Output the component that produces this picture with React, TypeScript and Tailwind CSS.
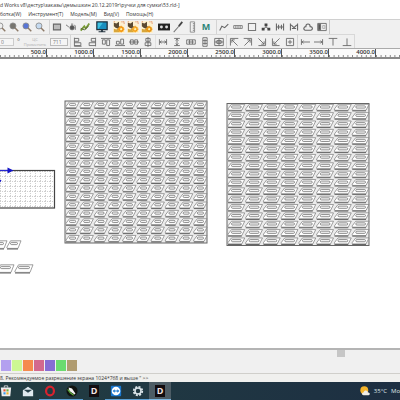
import React from 'react';

type Tool = { label: string; icon: React.ReactNode };
type PathTool = { label: string; d: string };

const Icon = ({ children }: { children: React.ReactNode }) => (
    <svg viewBox="0 0 14 14" className="h-2.5 w-2.5" fill="none" stroke="#666" strokeWidth="1.2">{children}</svg>
);

const Magnifier = ({ glass }: { glass: string }) => (
    <Icon>
        <circle cx="5.5" cy="5.5" r="4.2" fill={glass} stroke="#8a8a8a" />
        <path d="M8.5 8.5l4.500 4.500" stroke="#8d7a68" strokeWidth="2" />
    </Icon>
);

const Cutout = ({ flower }: { flower: string }) => (
    <svg viewBox="0 0 14 14" className="h-3 w-3" fill="none">
        <path d="M0 0h14v14H0z" fill="#fdf0d0" />
        <path d="M1 2l3 1 3-2v5l3 1-4 2-3-1-2-2z" fill="#5b4a33" />
        <path d="M1 13V9l3 1 3-2 1 5z" fill="#d8a63c" />
        <circle cx="9.500" cy="9.500" r="3.300" fill={flower} />
        <path d="M9.500 5.500v8M5.500 9.500h8M7 7l5 5M12 7l-5 5" stroke="#e67b10" strokeWidth=".8" />
        <circle cx="9.500" cy="9.500" r="1.300" fill="#fff3a8" />
        <path d="M10 1h3v3M1 1h1" stroke="#c9523a" strokeDasharray="1 1" />
    </svg>
);

const viewTools: Tool[] = [
    { label: 'Масштаб', icon: <Magnifier glass="#eeeeee" /> },
    { label: 'Уменьшить', icon: <Magnifier glass="#77756f" /> },
    { label: 'Увеличить', icon: <Magnifier glass="#5875d6" /> },
    { label: 'Показать всё', icon: <Magnifier glass="#c5daf0" /> },
];

const drawTools: Tool[] = [
    { label: 'Рамка', icon: <Icon><path d="M2 3h10v8H2z" fill="#bbb" stroke="#666" strokeWidth="1.5" /></Icon> },
    { label: 'Узлы', icon: <Icon><circle cx="8.500" cy="8" r="3" fill="#555" /><path d="M0 4l4 3M12 4l1 2v5M7 3h3" /></Icon> },
    { label: 'Кисть', icon: <Icon><path d="M1 12l5-6 2 3 5-7" stroke="#779a35" strokeWidth="2.5" /><path d="M1 9l5 2 6-5" stroke="#4c5730" /></Icon> },
];

const monitorTools: Tool[] = [
    {
        label: 'Экран',
        icon: (
            <svg viewBox="0 0 14 14" className="h-3 w-3">
                <path d="M1 1h12v9H1z" fill="#1b8fc0" stroke="#20303c" strokeWidth="1.500" />
                <path d="M2 2h6L3 9H2z" fill="#3fc2e2" />
                <path d="M6 10h2v2h3v1H3v-1h3z" fill="#20303c" />
            </svg>
        ),
    },
];

const cutTools: Tool[] = [
    { label: 'Вырезка 1', icon: <Cutout flower="#ffb11f" /> },
    { label: 'Вырезка 2', icon: <Cutout flower="#ffc53a" /> },
    { label: 'Вырезка 3', icon: <Cutout flower="#e6a71f" /> },
];

const machineTools: Tool[] = [
    { label: 'Лента', icon: <svg viewBox="0 0 14 14" className="h-3 w-3"><path d="M0 3h14v8H0z" fill="#222" /><circle cx="4" cy="7" r="1.700" fill="#ddd" /><circle cx="10" cy="7" r="1.700" fill="#ddd" /></svg> },
    { label: 'Лазер', icon: <svg viewBox="0 0 14 14" className="h-3 w-3" fill="none"><path d="M2 13l7-8" stroke="#777" strokeWidth="1.200" /><path d="M8 6l4-5" stroke="#444" strokeWidth="2" /></svg> },
    { label: 'Линейка', icon: <svg viewBox="0 0 14 14" className="h-3 w-3" fill="none"><path d="M5 1h5v12H5zM8 3h2M8 5h2M8 7h2M8 9h2M8 11h2" stroke="#888" /></svg> },
];

const shapeTools: Tool[] = [
    { label: 'Кривая', icon: <Icon><path d="M1 12l3-6 4 2 5-5" strokeWidth="1.500" /></Icon> },
    { label: 'Соединить', icon: <Icon><path d="M1 5h12v4H1zM4 5v4M7 5v4M10 5v4" stroke="#777" /></Icon> },
    { label: 'Квадрат', icon: <Icon><path d="M2 2h10v10H2z" stroke="#777" strokeWidth="1.500" /></Icon> },
    { label: 'Группа', icon: <Icon><path d="M7 4v3L3 10M7 7l4 3" /><path d="M5 2h4v4H5zM1 8h4v4H1zM9 8h4v4H9z" fill="#444" stroke="none" /></Icon> },
    { label: 'Ширина', icon: <Icon><path d="M2 2v10M12 2v10M2 7h10M5 4v6M9 4v6" strokeWidth="1.500" /></Icon> },
    { label: 'Разрыв', icon: <Icon><path d="M2 2v10M12 2v10M3 4l4 4 4-4M4 9h6" strokeWidth="1.500" /></Icon> },
    { label: 'Облако', icon: <Icon><path d="M3 11.500c-3-1-2-5 1-5 0-5 6-5 6 0 4 0 4 4 1 5z" strokeWidth="1.600" /></Icon> },
    { label: 'Просмотр', icon: <Icon><path d="M1 2h12v10H1z" /><path d="M2 3h3v8H2z" fill="#555" /><path d="M8 5h3v4H8z" stroke="#aaa" /></Icon> },
];

const alignTools: PathTool[] = [
    { label: 'По левому краю', d: 'M2 1v12M2 2h6v4H2M2 8h9v4H2M2 13h10' },
    { label: 'По правому краю', d: 'M12 1v12M12 2H6v4h6M12 8H3v4h9' },
    { label: 'По верху', d: 'M0 2h14M2 4h4v6H2zM8 4h4v8H8z' },
    { label: 'По низу', d: 'M0 12h14M2 6h4v4H2zM8 3h4v7H8z' },
    { label: 'По центру', d: 'M0 7h14M2 4h4v6H2zM8 4h4v6H8z' },
    { label: 'По середине', d: 'M7 0v14M4 2h6v4H4zM3 8h8v4H3z' },
];

const sizeTools: PathTool[] = [
    { label: 'Равная ширина', d: 'M2 3v8M12 3v8M2 7h10M5 5L3 7l2 2M9 5l2 2-2 2' },
    { label: 'Равная высота', d: 'M3 2h8M3 12h8M7 2v10M5 5l2-2 2 2M5 9l2 2 2-2' },
    { label: 'Равный шаг', d: 'M1 4h12v6H1zM3 7h8M5 4v6M9 4v6' },
    { label: 'Вертикальный шаг', d: 'M4 1h6v12H4zM4 5h6M4 9h6M7 3v8' },
    { label: 'Размер', d: 'M1 2h12v10H1zM7 2v10M1 7h12M4 5h6v4H4z' },
];

const cornerTools: PathTool[] = [
    { label: 'Левый верхний', d: 'M2 12V2h11M4 4l8 8M4 8V4h4' },
    { label: 'Правый верхний', d: 'M1 2h11v10M10 4l-8 8M6 4h4v4' },
    { label: 'Правый нижний', d: 'M2 12h10V2M2 2l8 8M6 10h4V6' },
    { label: 'Левый нижний', d: 'M2 2v10h10M12 2l-8 8M4 6v4h4' },
    { label: 'Центр листа', d: 'M2 2h10v10H2zM7 4v6M4 7h6' },
];

const edgeTools: PathTool[] = [
    { label: 'К левому краю', d: 'M2 3v8M2 7h12M5 5L3 7l2 2' },
    { label: 'К правому краю', d: 'M12 3v8M0 7h12M9 5l2 2-2 2' },
    { label: 'К верхнему краю', d: 'M1 2h12M7 2v10' },
    { label: 'К нижнему краю', d: 'M1 12h12M7 2v10' },
];

const palette = [
    { name: 'Сиреневый', color: 'bg-[#b3a0ef]' },
    { name: 'Салатовый', color: 'bg-[#cdf793]' },
    { name: 'Оранжевый', color: 'bg-[#f58b4e]' },
    { name: 'Розовый', color: 'bg-[#d3698e]' },
    { name: 'Фиолетовый', color: 'bg-[#866dd4]' },
    { name: 'Зелёный', color: 'bg-[#6bdb70]' },
    { name: 'Песочный', color: 'bg-[#b09c70]' },
];

const rulerMarks = ['500.0', '1000.0', '1500.0', '2000.0', '2500.0', '3000.0', '3500.0', '4000.0', ''];

const IconTools = ({ tools }: { tools: Tool[] }) => (
    <div className="flex shrink-0">
        {tools.map((tool) => (
            <button key={tool.label} aria-label={tool.label} className="flex w-3.5 items-center justify-center">{tool.icon}</button>
        ))}
    </div>
);

const PathTools = ({ tools }: { tools: PathTool[] }) => (
    <IconTools tools={tools.map(({ label, d }) => ({ label, icon: <Icon><path d={d} /></Icon> }))} />
);

// One bag handle: a slanted blank with a slot in it
const Handle = ({ x, y, w, h }: { x: number; y: number; w: number; h: number }) => (
    <g transform={`translate(${x} ${y})`}>
        <path d={`M4.500 .8H${w - 1}L${w - 4} ${h - 1.6}H1.500Q.5 ${h - 1.6} 1 ${h - 3}Z`} fill="#fff" stroke="#777" strokeWidth=".7" />
        <rect x="4.500" y="2.400" width={w - 9} height="2.200" rx="1.100" fill="#f4f4f4" stroke="#666" strokeWidth=".7" />
        <path d={`M1 ${h - 1}H${w - 4}`} stroke="#666" strokeWidth="1" />
    </g>
);

const Sheet = ({ x, y, cols }: { x: number; y: number; cols: number }) => {
    const size = 142;
    const rows = 17;
    const w = size / cols;
    const h = size / rows;
    return (
        <g>
            <rect x={x} y={y} width={size} height={size} fill="#ececec" stroke="#666" />
            {Array.from({ length: rows * cols }, (_, i) => (
                <Handle key={i} x={x + (i % cols) * w} y={y + Math.floor(i / cols) * h} w={w + 1} h={h} />
            ))}
        </g>
    );
};

const Drawing = () => (
    <svg width="400" height="230" viewBox="0 59 400 230" className="block shrink-0" role="img" aria-label="Раскладка ручек">
        <defs>
            <pattern id="grid" x="0" y="171" width="5" height="5" patternUnits="userSpaceOnUse">
                <path d="M0 .5H5M.5 0V5" stroke="#cfcfcf" strokeDasharray="1 1" fill="none" />
            </pattern>
        </defs>
        <rect x="-5" y="170.500" width="59.500" height="37.500" fill="url(#grid)" stroke="#444" strokeWidth="1.200" />
        <path d="M0 170.500H8" stroke="#2929d0" strokeWidth="1.200" />
        <path d="M7.500 167.500l6 3-6 3z" fill="#1515c8" />
        <path d="M0 179.500l1.500 1-1.500 2z" fill="#1515c8" />
        <Handle x={-8} y={240} w={16} h={10} />
        <Handle x={6} y={240} w={16} h={10} />
        <Handle x={-4} y={264} w={19} h={10} />
        <Handle x={14} y={264} w={20} h={10} />
        <Sheet x={65} y={101} cols={10} />
        <Sheet x={227} y={103.5} cols={8} />
    </svg>
);

const LetterD = () => (
    <span className="flex h-3 w-2.5 items-center justify-center bg-[#120c10] text-[9px] leading-none font-bold text-[#f3e3e3]">D</span>
);

const apps = [
    {
        name: 'Магазин', state: 'border-transparent',
        icon: (
            <svg viewBox="0 0 14 14" className="h-3 w-3">
                <path d="M5 3V1h4v2" fill="none" stroke="#ddd" />
                <path d="M1 3h12l-1 10H2z" fill="#eee" />
                <path d="M4 5h2.500v2.500H4z" fill="#e8553a" /><path d="M7.500 5H10v2.500H7.500z" fill="#6db33f" />
                <path d="M4 8.500h2.500V11H4z" fill="#3a9be8" /><path d="M7.500 8.500H10V11H7.500z" fill="#f0b429" />
            </svg>
        ),
    },
    {
        name: 'Почта', state: 'border-transparent',
        icon: <svg viewBox="0 0 14 14" className="h-3 w-3"><path d="M1 6l6-4 6 4v7H1z" fill="#dfe9ee" /><path d="M2 5.500h10L7 9z" fill="#28414a" /></svg>,
    },
    {
        name: 'Opera', state: 'border-[#5a9fd4]',
        icon: <svg viewBox="0 0 14 14" className="h-3 w-3"><ellipse cx="7" cy="7" rx="4.600" ry="5" fill="none" stroke="#d8232e" strokeWidth="2.600" /></svg>,
    },
    {
        name: 'CorelDRAW', state: 'border-[#5a9fd4]',
        icon: <svg viewBox="0 0 14 14" className="h-3 w-3"><circle cx="7" cy="7" r="6.500" fill="#10130f" /><path d="M3 3l4 1 4 6-1 1-6-4z" fill="#f4f4f4" /><path d="M2 5l3 4 4 3" stroke="#5da639" strokeWidth="1.500" fill="none" /></svg>,
    },
    { name: 'RDWorks', state: 'border-transparent', icon: <LetterD /> },
    {
        name: 'TeamViewer', state: 'border-[#5a9fd4]',
        icon: <svg viewBox="0 0 14 14" className="h-3 w-3"><rect x="1" y="1" width="12" height="12" rx="1" fill="#1b78d0" /><circle cx="7" cy="7" r="5" fill="#fff" /><path d="M3 7l2.500-2v1.300h3V5L11 7 8.500 9V7.700h-3V9z" fill="#1b78d0" /></svg>,
    },
    {
        name: 'Параметры', state: 'border-[#5a9fd4]',
        icon: <svg viewBox="0 0 14 14" className="h-3 w-3" fill="none"><circle cx="7" cy="7" r="5" stroke="#dce5ea" strokeWidth="2" strokeDasharray="2.400 1.520" /><circle cx="7" cy="7" r="3.500" stroke="#dce5ea" strokeWidth="1.800" /></svg>,
    },
    { name: 'RDWorks V8', state: 'border-[#7db8e4] bg-[#4d5c65]', icon: <LetterD /> },
];

export default function App() {
    return (
        <div className="flex min-h-screen flex-col overflow-hidden bg-white font-['Open_Sans','Noto_Sans',sans-serif] text-[#333]">
            <header className="overflow-hidden pt-px text-[5px] leading-[9px] whitespace-nowrap">
                d Works v8\дестур\заказы\демышкин 20.12.2019г\ручки для сумки\53.rld-]
            </header>
            <nav className="flex gap-[7px] text-[5px] leading-[9px] whitespace-nowrap">
                <button>ботка(W)</button>
                <button>Инструмент(T)</button>
                <button>Модель(M)</button>
                <button>Вид(V)</button>
                <button>Помощь(H)</button>
            </nav>

            {/* Toolbars */}
            <div className="border-t border-[#d0d0d0] bg-[#f0f0f0]">
                <div className="-ml-1.5 flex h-3.5 w-max items-stretch gap-[3px] border-r border-[#c8c8c8]">
                    <div className="flex shrink-0">
                        {viewTools.map((tool) => (
                            <button key={tool.label} aria-label={tool.label} className="flex w-[13px] items-center justify-center">{tool.icon}</button>
                        ))}
                    </div>
                    <div className="flex border-l border-[#d4d4d4]"><IconTools tools={drawTools} /></div>
                    <IconTools tools={monitorTools} />
                    <IconTools tools={cutTools} />
                    <div className="flex">
                        <IconTools tools={machineTools} />
                        <button aria-label="Модель" className="w-3.5 text-center text-[9px] leading-[14px] font-bold text-[#2b8478]">M</button>
                    </div>
                    <div className="flex border-l border-[#d4d4d4]"><IconTools tools={shapeTools} /></div>
                </div>
                <div className="flex h-3.5 w-max items-stretch border-t border-r border-[#d8d8d8]">
                    <div className="flex w-[71px] items-center gap-[3px] border-r border-[#d4d4d4] text-[5px] text-[#777]">
                        <input aria-label="Угол" defaultValue="0" className="h-2 w-3.5 border border-l-0 border-[#ccc] bg-[#f5f5f5] pl-px" />
                        <span className="text-[7px] leading-[9px]">°</span>
                        <button className="w-6 text-[4px] leading-[5px] text-[#aaa]">ЦС Применить</button>
                        <input aria-label="Номер" defaultValue="711" className="h-2 w-[18px] border border-[#bbb] bg-[#f5f5f5] pl-0.5" />
                    </div>
                    <PathTools tools={alignTools} />
                    <div className="flex border-l border-[#e0e0e0]"><PathTools tools={sizeTools} /></div>
                    <div className="flex border-l border-[#d4d4d4]"><PathTools tools={cornerTools} /></div>
                    <div className="flex border-l border-[#d4d4d4]"><PathTools tools={edgeTools} /></div>
                </div>
            </div>

            {/* Ruler */}
            <div className="flex h-[11px] overflow-hidden border-t border-b-2 border-t-[#aaa] border-b-[#8a8a8a] bg-[#fafafa]">
                {rulerMarks.map((mark, i) => (
                    <div key={i} className="flex w-[47px] shrink-0 flex-col border-r border-[#555] text-right text-[6px] leading-[7px] font-semibold text-[#333]">
                        <span className="h-1.5">{mark}</span>
                        <svg viewBox="0 0 47 2" className="h-0.5 w-full" preserveAspectRatio="none">
                            <path d="M0 1H47" stroke="#888" strokeWidth="2" strokeDasharray="1 3.700" />
                        </svg>
                    </div>
                ))}
            </div>

            <main className="flex-1 overflow-hidden bg-white">
                <Drawing />
            </main>

            <div className="flex h-[9px] justify-end border-t-2 border-[#b4b4b4] bg-[#f0f0f0] pr-[55px]">
                <div className="w-2 bg-[#c6c6c6]" />
            </div>
            <div className="flex gap-px border-b border-[#d0cfcb] bg-[#f0f0f0] pt-[3px] pb-0.5 pl-px">
                {palette.map((item) => (
                    <button key={item.name} aria-label={item.name} className={`h-[11px] w-2.5 ${item.color}`} />
                ))}
            </div>
            <footer className="h-2 overflow-hidden bg-[#f0f0ee] text-[5px] leading-[8px] font-medium whitespace-nowrap">
                8. Рекомендуемое разрешение экрана 1024*768 и выше &quot; &gt;&gt;
            </footer>

            {/* Taskbar */}
            <div className="flex h-[18px] items-stretch overflow-hidden bg-linear-to-r from-[#223d42] to-[#1d2f42]">
                <div className="-ml-[5px] flex">
                    {apps.map((app) => (
                        <button key={app.name} aria-label={app.name} className={`flex w-[22px] items-center justify-center border-b ${app.state}`}>
                            {app.icon}
                        </button>
                    ))}
                </div>
                <button className="ml-auto flex items-center gap-1 text-[6px] whitespace-nowrap text-[#dfe6ea]">
                    <svg viewBox="0 0 14 14" className="h-2.5 w-2.5 shrink-0">
                        <circle cx="6" cy="6" r="5.500" fill="#f5b52b" />
                        <path d="M5 13c-3 0-3-4 0-4 1-4 6-3 6 0 4 0 3 4 1 4z" fill="#f1eee8" />
                    </svg>
                    <span>35°C</span>
                    <span>Mo</span>
                </button>
            </div>
        </div>
    );
}
